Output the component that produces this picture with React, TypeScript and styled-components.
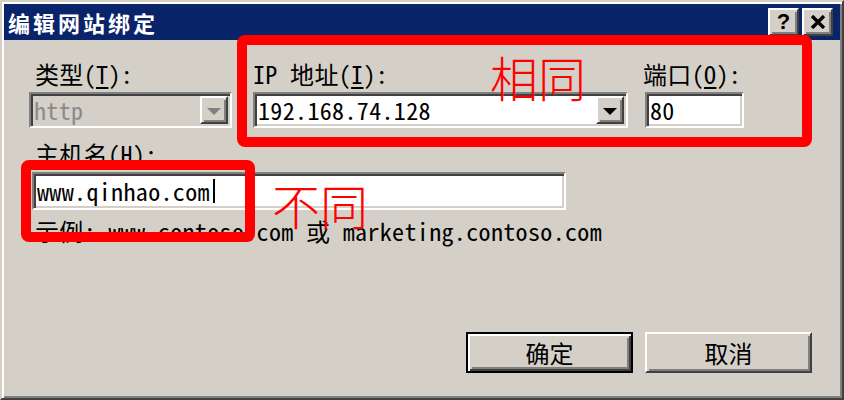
import React from "react";
import styled, { createGlobalStyle, css } from "styled-components";

const UI_FONT = `"Noto Sans Mono CJK SC", "Liberation Mono", "Noto Sans CJK SC", monospace`;
const CJK_FONT = `"Noto Sans CJK SC", "Noto Sans", sans-serif`;

const GlobalStyle = createGlobalStyle`
  html, body { margin: 0; padding: 0; background: #d4d0c8; }
  body { width: 844px; height: 400px; overflow: hidden; font-family: ${UI_FONT}; }
  * { box-sizing: border-box; }
`;

const raised = css`
  border: 2px solid;
  border-color: #ffffff #404040 #404040 #ffffff;
  box-shadow: inset 2px 2px #d4d0c8, inset -2px -2px #808080;
`;

const sunken = css`
  border: 2px solid;
  border-color: #808080 #ffffff #ffffff #808080;
  box-shadow: inset 2px 2px #404040, inset -2px -2px #d4d0c8;
`;

const Page = styled.div`
  position: relative;
  width: 844px;
  height: 400px;
`;

const Window = styled.div`
  width: 844px;
  height: 400px;
  background: #d4d0c8;
  border: 2px solid;
  border-color: #d4d0c8 #404040 #404040 #d4d0c8;
  box-shadow: inset 2px 2px #ffffff, inset -2px -2px #808080;
  padding: 2px;
  display: flex;
  flex-direction: column;
`;

const TitleBar = styled.div`
  height: 36px;
  background: #0a246a;
  display: flex;
  align-items: center;
  padding: 0 7px 0 4px;
`;

const Title = styled.div`
  flex: 1;
  color: #ffffff;
  font-family: ${CJK_FONT};
  font-weight: 700;
  font-size: 22px;
  letter-spacing: 3px;
  line-height: 36px;
`;

const CaptionButtons = styled.div`
  display: flex;
  gap: 3px;
`;

const CaptionButton = styled.div`
  ${raised};
  width: 31px;
  height: 28px;
  background: #d4d0c8;
  display: flex;
  align-items: center;
  justify-content: center;
  color: #000;
  font-family: "Liberation Sans", sans-serif;
  font-weight: 700;
  font-size: 22px;
  line-height: 1;
`;

const Content = styled.div`
  flex: 1;
  display: flex;
  flex-direction: column;
  padding: 21px 28px 23px 25px;
  letter-spacing: 0.35px;
`;

const TopRow = styled.div`
  display: flex;
  align-items: flex-end;
`;

const Field = styled.div<{ $w: number; $ml?: number }>`
  width: ${(p) => p.$w}px;
  margin-left: ${(p) => p.$ml ?? 0}px;
  display: flex;
  flex-direction: column;
  gap: 5px;
`;

const Label = styled.div<{ $indent?: number }>`
  height: 26px;
  line-height: 26px;
  font-size: 24px;
  color: #000;
  white-space: pre;
  padding-left: ${(p) => p.$indent ?? 0}px;
`;

const Key = styled.span`
  text-decoration: underline;
  text-underline-offset: 3px;
`;

const TextBox = styled.div<{ $h?: number; $ml?: number; $disabled?: boolean }>`
  ${sunken};
  height: ${(p) => p.$h ?? 36}px;
  margin-left: ${(p) => p.$ml ?? 0}px;
  background: ${(p) => (p.$disabled ? "#d4d0c8" : "#ffffff")};
  color: ${(p) => (p.$disabled ? "#8a8a8a" : "#000")};
  display: flex;
  align-items: center;
  padding: 2px 2px 2px 3px;
  font-size: 24px;
  line-height: 1;
  white-space: pre;
`;

const BoxText = styled.span`
  flex: 1;
  display: flex;
  align-items: center;
`;

const DropButton = styled.div`
  ${raised};
  width: 28px;
  height: 28px;
  background: #d4d0c8;
  display: flex;
  align-items: center;
  justify-content: center;
`;

const Arrow = styled.div<{ $disabled?: boolean }>`
  width: 0;
  height: 0;
  border-left: 7px solid transparent;
  border-right: 7px solid transparent;
  border-top: 7px solid ${(p) => (p.$disabled ? "#808080" : "#000")};
  margin-top: 2px;
`;

const Caret = styled.span`
  display: inline-block;
  width: 2px;
  height: 24px;
  background: #000;
  margin-left: 3px;
`;

const HostSection = styled.div`
  display: flex;
  flex-direction: column;
  gap: 5px;
  margin-top: 13px;
  width: 537px;
`;

const HostInput = styled(TextBox)`
  margin-left: 3px;
`;

const Example = styled.div`
  margin-top: 8px;
  height: 26px;
  line-height: 26px;
  font-size: 24px;
  padding-left: 6px;
  white-space: pre;
  color: #000;
`;

const ButtonRow = styled.div`
  margin-top: auto;
  display: flex;
  justify-content: flex-end;
  gap: 12px;
`;

const PushButton = styled.div<{ $default?: boolean }>`
  width: 167px;
  height: 41px;
  background: #d4d0c8;
  display: flex;
  align-items: center;
  justify-content: center;
  font-size: 24px;
  letter-spacing: 0;
  color: #000;
  ${(p) =>
    p.$default
      ? css`
          border: 2px solid #000;
          box-shadow: inset 2px 2px #ffffff, inset -2px -2px #404040,
            inset 4px 4px #d4d0c8, inset -4px -4px #808080;
        `
      : raised};
`;

const RedFrame = styled.div<{ $x: number; $y: number; $w: number; $h: number }>`
  position: absolute;
  left: ${(p) => p.$x}px;
  top: ${(p) => p.$y}px;
  width: ${(p) => p.$w}px;
  height: ${(p) => p.$h}px;
  border: 10px solid #ff0000;
  border-radius: 8px;
  pointer-events: none;
`;

const RedNote = styled.div<{ $x: number; $y: number }>`
  position: absolute;
  left: ${(p) => p.$x}px;
  top: ${(p) => p.$y}px;
  font-family: ${CJK_FONT};
  font-weight: 300;
  font-size: 48px;
  line-height: 48px;
  color: #ff0000;
  white-space: nowrap;
`;

export default function App() {
  return (
    <Page>
      <GlobalStyle />
      <Window>
        <TitleBar>
          <Title>编辑网站绑定</Title>
          <CaptionButtons>
            <CaptionButton>?</CaptionButton>
            <CaptionButton>
              <svg width="16" height="14" viewBox="0 0 16 14">
                <path d="M2 1 L14 13 M14 1 L2 13" stroke="#000" strokeWidth="3.4" />
              </svg>
            </CaptionButton>
          </CaptionButtons>
        </TitleBar>
        <Content>
          <TopRow>
            <Field $w={203}>
              <Label $indent={6}>
                类型(<Key>T</Key>):
              </Label>
              <TextBox $disabled>
                <BoxText>http</BoxText>
                <DropButton>
                  <Arrow $disabled />
                </DropButton>
              </TextBox>
            </Field>
            <Field $w={375} $ml={21}>
              <Label>
                IP 地址(<Key>I</Key>):
              </Label>
              <TextBox>
                <BoxText>192.168.74.128</BoxText>
                <DropButton>
                  <Arrow />
                </DropButton>
              </TextBox>
            </Field>
            <Field $w={101} $ml={15}>
              <Label>
                端口(<Key>O</Key>):
              </Label>
              <TextBox $ml={2}>
                <BoxText>80</BoxText>
              </TextBox>
            </Field>
          </TopRow>
          <HostSection>
            <Label $indent={6}>
              主机名(<Key>H</Key>):
            </Label>
            <HostInput $h={38}>
              <BoxText>
                www.qinhao.com
                <Caret />
              </BoxText>
            </HostInput>
          </HostSection>
          <Example>示例: www.contoso.com 或 marketing.contoso.com</Example>
          <ButtonRow>
            <PushButton $default>确定</PushButton>
            <PushButton>取消</PushButton>
          </ButtonRow>
        </Content>
      </Window>
      <RedFrame $x={237} $y={35} $w={575} $h={112} />
      <RedNote $x={490} $y={52}>相同</RedNote>
      <RedFrame $x={21} $y={160} $w={234} $h={82} />
      <RedNote $x={272} $y={180}>不同</RedNote>
    </Page>
  );
}
